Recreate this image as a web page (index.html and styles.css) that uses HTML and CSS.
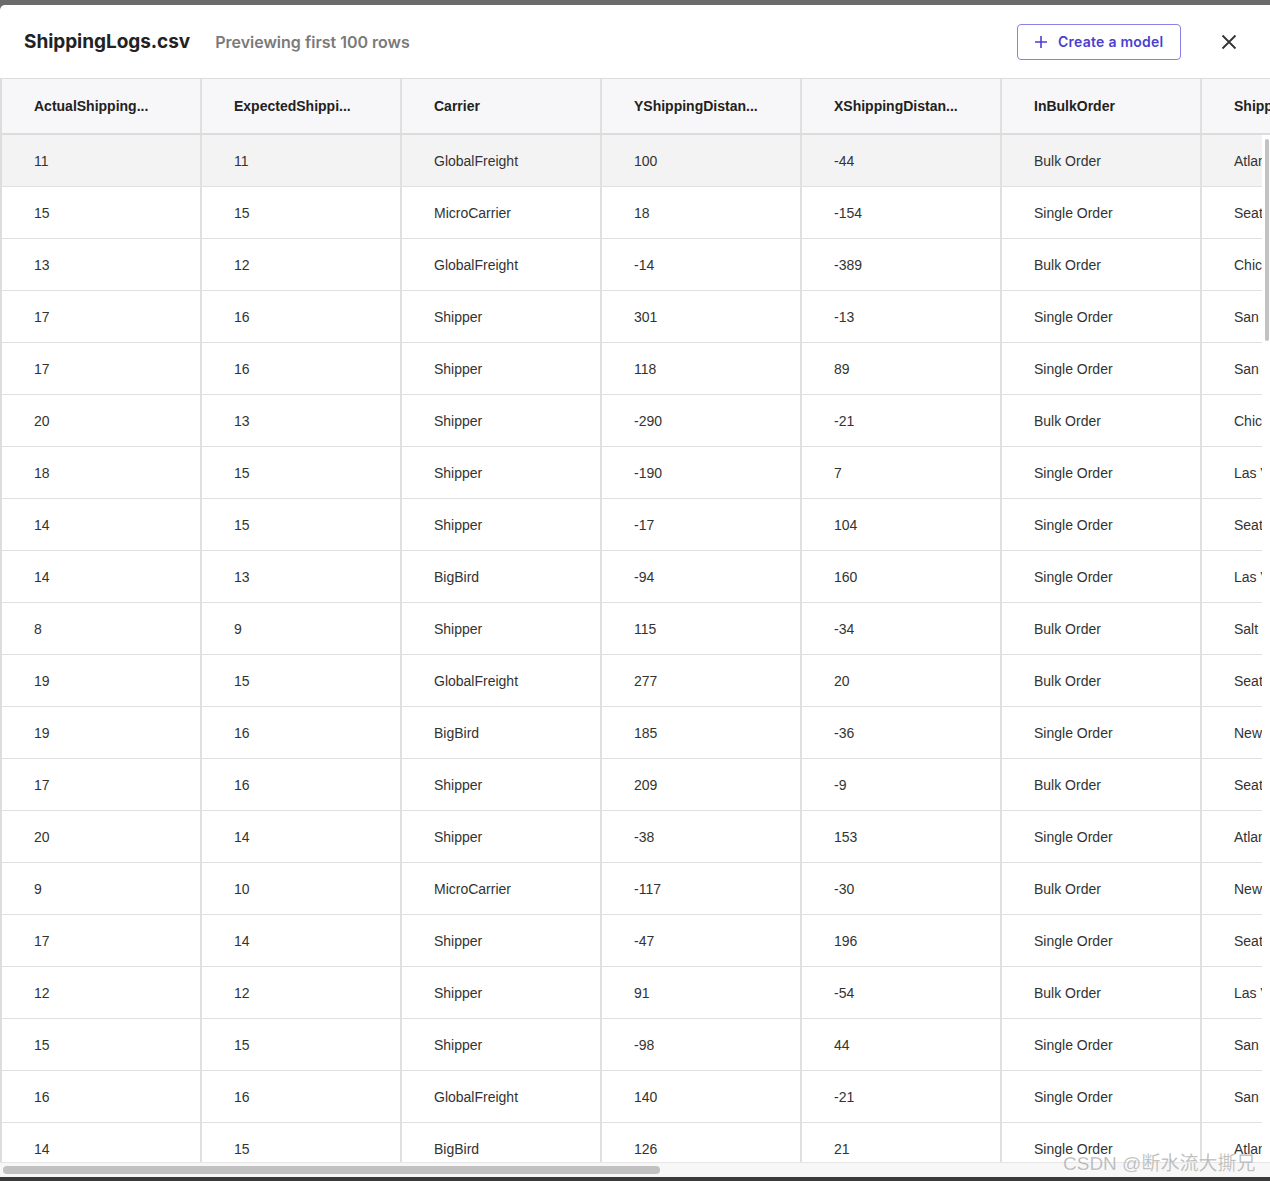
FILE: index.html
```html
<!DOCTYPE html>
<html>
<head>
<meta charset="utf-8">
<link rel="stylesheet" href="styles.css">
</head>
<body>
<div class="modal">
  <header class="bar">
    <div class="titles">
      <h1 class="title">ShippingLogs.csv</h1>
      <span class="sub">Previewing first 100 rows</span>
    </div>
    <div class="actions">
      <button class="create">
        <svg width="14" height="14" viewBox="0 0 14 14"><path d="M7 1v12M1 7h12" stroke="#4a3fd1" stroke-width="1.6" fill="none"/></svg>
        <span>Create a model</span>
      </button>
      <button class="close" aria-label="Close">
        <svg width="16" height="16" viewBox="0 0 16 16"><path d="M1.5 1.5l13 13M14.5 1.5l-13 13" stroke="#333" stroke-width="1.8" fill="none"/></svg>
      </button>
    </div>
  </header>
  <div class="viewport">
    <div class="grid">
      <div class="row head">
        <div class="cell">ActualShipping...</div>
        <div class="cell">ExpectedShippi...</div>
        <div class="cell">Carrier</div>
        <div class="cell">YShippingDistan...</div>
        <div class="cell">XShippingDistan...</div>
        <div class="cell">InBulkOrder</div>
        <div class="cell">ShippingOrigin</div>
      </div>
      <div class="row hover"><div class="cell">11</div><div class="cell">11</div><div class="cell">GlobalFreight</div><div class="cell">100</div><div class="cell">-44</div><div class="cell">Bulk Order</div><div class="cell">Atlanta</div></div>
      <div class="row"><div class="cell">15</div><div class="cell">15</div><div class="cell">MicroCarrier</div><div class="cell">18</div><div class="cell">-154</div><div class="cell">Single Order</div><div class="cell">Seattle</div></div>
      <div class="row"><div class="cell">13</div><div class="cell">12</div><div class="cell">GlobalFreight</div><div class="cell">-14</div><div class="cell">-389</div><div class="cell">Bulk Order</div><div class="cell">Chicago</div></div>
      <div class="row"><div class="cell">17</div><div class="cell">16</div><div class="cell">Shipper</div><div class="cell">301</div><div class="cell">-13</div><div class="cell">Single Order</div><div class="cell">San Francisco</div></div>
      <div class="row"><div class="cell">17</div><div class="cell">16</div><div class="cell">Shipper</div><div class="cell">118</div><div class="cell">89</div><div class="cell">Single Order</div><div class="cell">San Diego</div></div>
      <div class="row"><div class="cell">20</div><div class="cell">13</div><div class="cell">Shipper</div><div class="cell">-290</div><div class="cell">-21</div><div class="cell">Bulk Order</div><div class="cell">Chicago</div></div>
      <div class="row"><div class="cell">18</div><div class="cell">15</div><div class="cell">Shipper</div><div class="cell">-190</div><div class="cell">7</div><div class="cell">Single Order</div><div class="cell">Las Vegas</div></div>
      <div class="row"><div class="cell">14</div><div class="cell">15</div><div class="cell">Shipper</div><div class="cell">-17</div><div class="cell">104</div><div class="cell">Single Order</div><div class="cell">Seattle</div></div>
      <div class="row"><div class="cell">14</div><div class="cell">13</div><div class="cell">BigBird</div><div class="cell">-94</div><div class="cell">160</div><div class="cell">Single Order</div><div class="cell">Las Vegas</div></div>
      <div class="row"><div class="cell">8</div><div class="cell">9</div><div class="cell">Shipper</div><div class="cell">115</div><div class="cell">-34</div><div class="cell">Bulk Order</div><div class="cell">Salt Lake City</div></div>
      <div class="row"><div class="cell">19</div><div class="cell">15</div><div class="cell">GlobalFreight</div><div class="cell">277</div><div class="cell">20</div><div class="cell">Bulk Order</div><div class="cell">Seattle</div></div>
      <div class="row"><div class="cell">19</div><div class="cell">16</div><div class="cell">BigBird</div><div class="cell">185</div><div class="cell">-36</div><div class="cell">Single Order</div><div class="cell">New York</div></div>
      <div class="row"><div class="cell">17</div><div class="cell">16</div><div class="cell">Shipper</div><div class="cell">209</div><div class="cell">-9</div><div class="cell">Bulk Order</div><div class="cell">Seattle</div></div>
      <div class="row"><div class="cell">20</div><div class="cell">14</div><div class="cell">Shipper</div><div class="cell">-38</div><div class="cell">153</div><div class="cell">Single Order</div><div class="cell">Atlanta</div></div>
      <div class="row"><div class="cell">9</div><div class="cell">10</div><div class="cell">MicroCarrier</div><div class="cell">-117</div><div class="cell">-30</div><div class="cell">Bulk Order</div><div class="cell">New York</div></div>
      <div class="row"><div class="cell">17</div><div class="cell">14</div><div class="cell">Shipper</div><div class="cell">-47</div><div class="cell">196</div><div class="cell">Single Order</div><div class="cell">Seattle</div></div>
      <div class="row"><div class="cell">12</div><div class="cell">12</div><div class="cell">Shipper</div><div class="cell">91</div><div class="cell">-54</div><div class="cell">Bulk Order</div><div class="cell">Las Vegas</div></div>
      <div class="row"><div class="cell">15</div><div class="cell">15</div><div class="cell">Shipper</div><div class="cell">-98</div><div class="cell">44</div><div class="cell">Single Order</div><div class="cell">San Diego</div></div>
      <div class="row"><div class="cell">16</div><div class="cell">16</div><div class="cell">GlobalFreight</div><div class="cell">140</div><div class="cell">-21</div><div class="cell">Single Order</div><div class="cell">San Francisco</div></div>
      <div class="row"><div class="cell">14</div><div class="cell">15</div><div class="cell">BigBird</div><div class="cell">126</div><div class="cell">21</div><div class="cell">Single Order</div><div class="cell">Atlanta</div></div>
    </div>
    <div class="vscroll"><div class="vthumb"></div></div>
  </div>
  <div class="hscroll"><div class="hthumb"></div></div>
  <div class="watermark">CSDN @断水流大撕兄</div>
</div>
</body>
</html>
```

FILE: styles.css
```css
html, body {
  margin: 0;
  padding: 0;
}
body {
  width: 1270px;
  height: 1181px;
  overflow: hidden;
  background: linear-gradient(#6b6b6b 0, #6b6b6b 50%, #3a3a3a 50%, #3a3a3a 100%);
  font-family: "Liberation Sans", Arial, sans-serif;
}
.modal {
  position: relative;
  margin-top: 5px;
  height: 1172px;
  background: #fff;
  border-radius: 5px 0 0 0;
  overflow: hidden;
  display: flex;
  flex-direction: column;
}
.bar {
  height: 73px;
  flex: 0 0 73px;
  display: flex;
  align-items: center;
  justify-content: space-between;
  padding: 0 0 0 24px;
  box-sizing: border-box;
}
.titles {
  display: flex;
  align-items: baseline;
  gap: 25px;
}
.title {
  margin: 0;
  font-family: Inter, "Liberation Sans", sans-serif;
  font-size: 19px;
  font-weight: 700;
  color: #222;
  letter-spacing: -0.05px;
}
.sub {
  font-family: Inter, "Liberation Sans", sans-serif;
  font-size: 16px;
  font-weight: 600;
  color: #7a7a7a;
  letter-spacing: 0;
}
.actions {
  display: flex;
  align-items: center;
}
.create {
  width: 164px;
  height: 36px;
  box-sizing: border-box;
  border: 1px solid #8b80e8;
  border-radius: 4px;
  background: #fff;
  display: flex;
  align-items: center;
  padding: 0 0 0 16px;
  gap: 10px;
  font-family: Inter, "Liberation Sans", sans-serif;
  font-size: 14px;
  font-weight: 600;
  letter-spacing: 0.25px;
  color: #4a3fd1;
  cursor: pointer;
}
.close {
  width: 16px;
  height: 16px;
  margin: 0 33px 0 40px;
  padding: 0;
  border: 0;
  background: none;
  display: flex;
}
.viewport {
  position: relative;
  height: 1084px;
  flex: 0 0 1084px;
  overflow: hidden;
}
.grid {
  width: 1402px;
  border-left: 2px solid #dddddd;
}
.row {
  display: flex;
  height: 52px;
  box-sizing: border-box;
  border-bottom: 1px solid #e0e0e0;
}
.row.head {
  height: 57px;
  border-top: 1px solid #dddddd;
  border-bottom: 2px solid #dcdcdc;
  background: #f7f7f9;
}
.row.hover {
  background: #f3f3f3;
}
.cell {
  flex: 0 0 200px;
  width: 200px;
  box-sizing: border-box;
  border-right: 2px solid #e0e0e0;
  padding-left: 32px;
  display: flex;
  align-items: center;
  font-size: 14px;
  color: #333;
  white-space: nowrap;
  overflow: hidden;
}
.head .cell {
  font-size: 14px;
  font-weight: 700;
  color: #222;
}
.vscroll {
  position: absolute;
  right: 0;
  top: 57px;
  bottom: 0;
  width: 8px;
  background: #fff;
}
.vthumb {
  margin: 4px 1px 0 3px;
  height: 202px;
  border-radius: 3px;
  background: #c2c2c2;
}
.hscroll {
  flex: 0 0 15px;
  height: 15px;
  background: #f7f7f7;
  border-top: 1px solid #e6e6e6;
  box-sizing: border-box;
  padding: 3px 0 0 3px;
}
.hthumb {
  width: 657px;
  height: 8px;
  border-radius: 4px;
  background: #c1c1c1;
}
.watermark {
  position: absolute;
  left: 1063px;
  top: 1143px;
  font-family: "Liberation Sans", "Noto Sans CJK SC", sans-serif;
  font-size: 19px;
  color: rgba(170, 170, 170, 0.85);
  -webkit-text-stroke: 0.3px rgba(255,255,255,0.6);
  white-space: nowrap;
}
```
